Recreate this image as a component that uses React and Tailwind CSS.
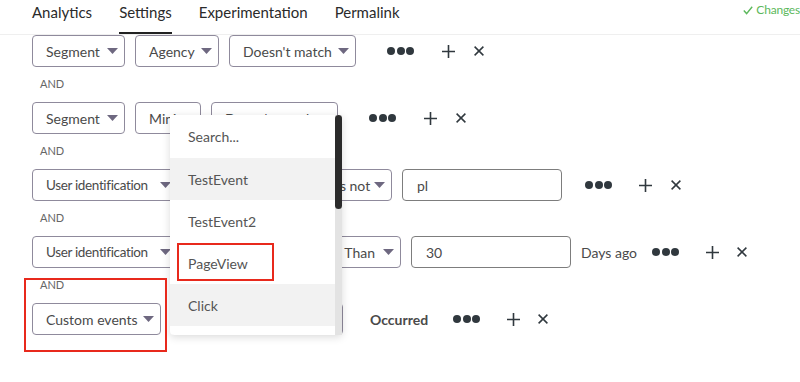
import React from 'react';

const Caret = () => (
  <svg width="11" height="6" viewBox="0 0 11 6" className="shrink-0">
    <path d="M0 0h11L5.5 6z" fill="#6e6880" />
  </svg>
);

const Select = ({ label, w, tight }) => (
  <div
    className={`flex h-8 shrink-0 items-center justify-between rounded border border-[#8f8a9c] pl-[13px] pr-[6px] text-[#4a4a4a] whitespace-nowrap ${w}`}
  >
    <span className={tight ? 'text-[13.5px] tracking-[-0.35px]' : 'text-[14px]'}>{label}</span>
    <Caret />
  </div>
);

const TextBox = ({ value }) => (
  <div className="ml-[10px] flex h-8 w-[160px] shrink-0 items-center rounded border border-[#7d7d7d] pl-[14px] text-[14px] text-[#4a4a4a]">
    {value}
  </div>
);

const Dots = ({ className }) => (
  <div className={`flex shrink-0 gap-[1.5px] ${className}`}>
    <span className="h-2 w-2 rounded-full bg-[#30383e]" />
    <span className="h-2 w-2 rounded-full bg-[#30383e]" />
    <span className="h-2 w-2 rounded-full bg-[#30383e]" />
  </div>
);

const Plus = ({ className }) => (
  <svg width="13" height="13" viewBox="0 0 13 13" className={`shrink-0 ${className}`}>
    <path d="M6.5 0v13M0 6.5h13" stroke="#30383e" strokeWidth="1.6" />
  </svg>
);

const Close = ({ className }) => (
  <svg width="10" height="10" viewBox="0 0 10 10" className={`shrink-0 ${className}`}>
    <path d="M0.6 0.6l8.8 8.8M9.4 0.6l-8.8 8.8" stroke="#30383e" strokeWidth="1.5" />
  </svg>
);

const And = () => (
  <div className="flex h-[35px] items-center pl-2 text-[11px] text-[#666]">AND</div>
);

const tabs = ['Analytics', 'Settings', 'Experimentation', 'Permalink'];
const events = ['TestEvent', 'TestEvent2', 'PageView', 'Click'];

export default function App() {
  return (
    <div className="relative h-[382px] w-[800px] overflow-hidden bg-white font-['Lato',sans-serif] text-[#333]">
      {/* header tabs */}
      <div className="flex h-[35px] items-start border-b border-[#efefef] pl-[32px]">
        <div className="flex gap-[27px]">
          {tabs.map((t) => (
            <div
              key={t}
              className={`h-[34px] text-[15px] leading-6 text-[#2a2a2a] ${
                t === 'Settings' ? 'border-b-2 border-[#222]' : ''
              }`}
            >
              {t}
            </div>
          ))}
        </div>
        <div className="ml-auto flex shrink-0 items-center gap-[3px] whitespace-nowrap pt-[1px] text-[12px] tracking-[-0.2px] text-[#5cb85c]">
          <svg width="10" height="9" viewBox="0 0 10 9" className="shrink-0">
            <path d="M0.8 4.6l2.8 3 5.6-6.8" fill="none" stroke="#5cb85c" strokeWidth="1.4" />
          </svg>
          <span>Changes</span>
        </div>
      </div>

      {/* conditions */}
      <div className="pl-[32px]">
        <div className="flex h-8 items-center">
          <div className="flex gap-[10px]">
            <Select label="Segment" w="w-[93px]" />
            <Select label="Agency" w="w-[84px]" />
            <Select label="Doesn't match" w="w-[127px]" />
          </div>
          <Dots className="ml-[31px]" />
          <Plus className="ml-[28px]" />
          <Close className="ml-[19px]" />
        </div>

        <And />
        <div className="flex h-8 items-center">
          <div className="flex gap-[10px]">
            <Select label="Segment" w="w-[93px]" />
            <Select label="Mini" w="w-[66px]" />
            <Select label="Doesn't match" w="w-[127px]" />
          </div>
          <Dots className="ml-[31px]" />
          <Plus className="ml-[28px]" />
          <Close className="ml-[19px]" />
        </div>

        <And />
        <div className="flex h-8 items-center">
          <div className="flex gap-[10px]">
            <Select label="User identification" w="w-[146px]" tight />
            <Select label="Email" w="w-[102px]" />
            <Select label="Does not" w="w-[92px]" />
          </div>
          <TextBox value="pl" />
          <Dots className="ml-[23px]" />
          <Plus className="ml-[27px]" />
          <Close className="ml-[19px]" />
        </div>

        <And />
        <div className="flex h-8 items-center">
          <div className="flex gap-[10px]">
            <Select label="User identification" w="w-[146px]" tight />
            <Select label="Last seen" w="w-[103px]" />
            <Select label="Less Than" w="w-[100px]" />
          </div>
          <TextBox value="30" />
          <span className="ml-[10px] text-[14px] text-[#4a4a4a]">Days ago</span>
          <Dots className="ml-[15px]" />
          <Plus className="ml-[27px]" />
          <Close className="ml-[18px]" />
        </div>

        <And />
        <div className="flex h-8 items-center">
          <div className="flex gap-[10px]">
            <Select label="Custom events" w="w-[129px]" />
            <Select label="Select event" w="w-[172px]" />
          </div>
          <span className="ml-[27px] text-[14px] font-bold text-[#4a4a4a]">Occurred</span>
          <Dots className="ml-[25px]" />
          <Plus className="ml-[27px]" />
          <Close className="ml-[18px]" />
        </div>
      </div>

      {/* open event dropdown */}
      <div className="absolute left-[170px] top-[115px] flex h-[220px] w-[172px] rounded-b bg-white shadow-[0_2px_8px_rgba(0,0,0,0.15)]">
        <div className="flex flex-1 flex-col pb-2 text-[14px] text-[#555]">
          <div className="flex h-[43px] items-center pl-[18px]">Search...</div>
          {events.map((e, i) => (
            <div
              key={e}
              className={`relative flex h-[42px] items-center pl-[18px] ${
                i === 0 || i === 3 ? 'bg-[#f2f2f2]' : ''
              }`}
            >
              {e}
              {e === 'PageView' && (
                <div className="absolute left-[7px] top-px h-[38px] w-[97px] border-2 border-[#e8291c]" />
              )}
            </div>
          ))}
        </div>
        <div className="w-[7px] bg-[#e3e3e3]">
          <div className="h-[94px] rounded-full bg-[#2b2b2b]" />
        </div>
      </div>

      {/* highlight around the custom events condition */}
      <div className="absolute left-[24px] top-[278px] h-[74px] w-[143px] border-2 border-[#e8291c]" />
    </div>
  );
}
